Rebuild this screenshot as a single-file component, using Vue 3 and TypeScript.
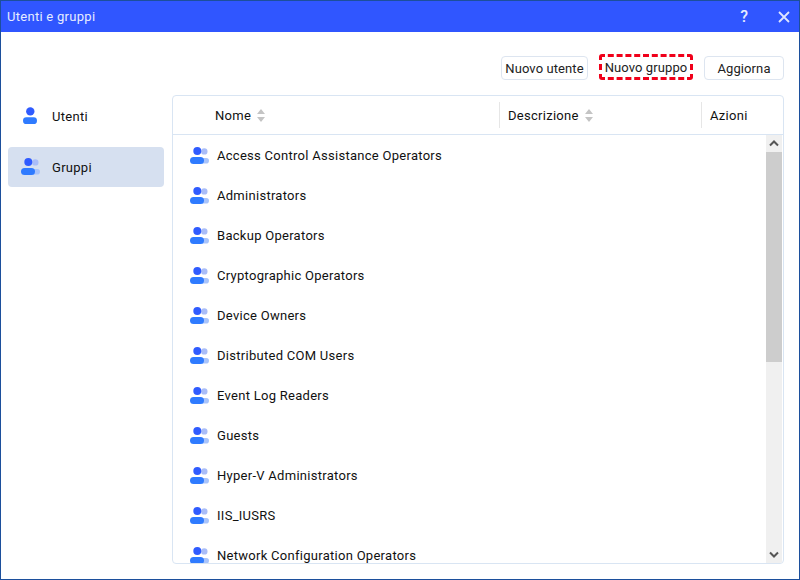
<script setup lang="ts">
const groups: string[] = [
  'Access Control Assistance Operators',
  'Administrators',
  'Backup Operators',
  'Cryptographic Operators',
  'Device Owners',
  'Distributed COM Users',
  'Event Log Readers',
  'Guests',
  'Hyper-V Administrators',
  'IIS_IUSRS',
  'Network Configuration Operators',
]
</script>

<template>
  <div class="win">
    <header class="title">
      <span class="title-text">Utenti e gruppi</span>
      <span class="help">?</span>
      <svg class="close" width="12" height="12" viewBox="0 0 12 12">
        <path d="M1 1 L11 11 M11 1 L1 11" stroke="#dfe6ff" stroke-width="1.8" fill="none" />
      </svg>
    </header>
    <div class="toolbar">
      <button class="btn b1">Nuovo utente</button>
      <button class="btn b2">Nuovo gruppo</button>
      <button class="btn b3">Aggiorna</button>
    </div>
    <div class="body">
      <nav class="side">
        <div class="nav-item first">
          <svg class="nav-icon" width="20" height="20" viewBox="0 0 20 20">
            <circle cx="9.3" cy="5.4" r="4.2" fill="#2f5bff" />
            <rect x="2" y="11.3" width="14" height="6.8" rx="3.4" fill="#2f7bff" />
          </svg>
          <span>Utenti</span>
        </div>
        <div class="nav-item active">
          <svg class="group-icon" width="20" height="18" viewBox="0 0 20 18">
            <circle cx="14.3" cy="4.4" r="3.2" fill="#a9bdf8" />
            <rect x="10" y="11" width="9" height="5.6" rx="2.8" fill="#a9c4fb" />
            <circle cx="7.3" cy="4" r="4" fill="#2f5bff" />
            <rect x="0" y="10" width="14" height="7" rx="3.5" fill="#2f7bff" />
          </svg>
          <span>Gruppi</span>
        </div>
      </nav>
      <section class="panel">
        <div class="thead">
          <div class="th c-name">Nome
            <svg class="sort" width="8" height="13" viewBox="0 0 8 13"><path d="M4 0 L8 5 H0 Z M4 13 L8 8 H0 Z" fill="#c4c4c4" /></svg>
          </div>
          <div class="th c-desc">Descrizione
            <svg class="sort" width="8" height="13" viewBox="0 0 8 13"><path d="M4 0 L8 5 H0 Z M4 13 L8 8 H0 Z" fill="#c4c4c4" /></svg>
          </div>
          <div class="th c-act">Azioni</div>
        </div>
        <div class="tbody">
          <div class="rows">
            <div v-for="g in groups" :key="g" class="row">
              <svg class="group-icon" width="20" height="18" viewBox="0 0 20 18">
                <circle cx="14.3" cy="4.4" r="3.2" fill="#a9bdf8" />
                <rect x="10" y="11" width="9" height="5.6" rx="2.8" fill="#a9c4fb" />
                <circle cx="7.3" cy="4" r="4" fill="#2f5bff" />
                <rect x="0" y="10" width="14" height="7" rx="3.5" fill="#2f7bff" />
              </svg>
              <span>{{ g }}</span>
            </div>
          </div>
          <div class="scrollbar">
            <div class="arrow">
              <svg width="10" height="7" viewBox="0 0 10 7"><path d="M1 5.5 L5 1.5 L9 5.5" stroke="#555" stroke-width="2" fill="none" /></svg>
            </div>
            <div class="thumb"></div>
            <div class="track"></div>
            <div class="arrow">
              <svg width="10" height="7" viewBox="0 0 10 7"><path d="M1 1.5 L5 5.5 L9 1.5" stroke="#555" stroke-width="2" fill="none" /></svg>
            </div>
          </div>
        </div>
      </section>
    </div>
  </div>
</template>

<style>
html, body { margin: 0; background: #fff; }
</style>

<style scoped>
.win {
  width: 800px;
  height: 580px;
  box-sizing: border-box;
  border: 1px solid #1c4f9c;
  background: #fff;
  display: flex;
  flex-direction: column;
  overflow: hidden;
  font-family: Roboto, "Liberation Sans", sans-serif;
  font-size: 13px;
  letter-spacing: 0.28px;
  color: #111;
}
.title {
  height: 31px;
  flex: none;
  background: #3056ff;
  color: #e6ecff;
  display: flex;
  align-items: center;
  padding: 0 9px 0 6px;
}
.title-text { flex: 1; }
.help { font-size: 16px; font-weight: 500; margin-right: 30px; letter-spacing: 0; }
.toolbar {
  flex: none;
  height: 63px;
  box-sizing: border-box;
  padding-top: 24px;
  display: flex;
  justify-content: flex-end;
  align-items: flex-start;
  padding-right: 15px;
}
.btn {
  height: 24px;
  box-sizing: border-box;
  background: #fff;
  border: 1px solid #dde5f0;
  border-radius: 4px;
  font: inherit;
  letter-spacing: 0.1px;
  color: #222;
  padding: 0;
  text-align: center;
  white-space: nowrap;
}
.b1 { width: 87px; }
.b2 {
  width: 94px;
  height: 26px;
  margin: -2px 0 0 11px;
  padding-top: 1px;
  border: 3px dashed #f0001a;
  border-radius: 3px;
}
.b3 { width: 80px; margin-left: 11px; }
.body { flex: 1; display: flex; min-height: 0; }
.side { width: 171px; flex: none; padding-left: 7px; box-sizing: border-box; }
.nav-item {
  width: 156px;
  height: 40px;
  box-sizing: border-box;
  display: flex;
  align-items: center;
  border-radius: 4px;
  padding-left: 13px;
}
.first { margin-top: 1px; }
.nav-item span { margin-left: 11px; }
.active { background: #d6e0f0; margin-top: 11px; }
.panel {
  width: 612px;
  height: 469px;
  box-sizing: border-box;
  border: 1px solid #d9e5f3;
  border-radius: 4px;
  display: flex;
  flex-direction: column;
  overflow: hidden;
}
.thead {
  height: 39px;
  flex: none;
  box-sizing: border-box;
  border-bottom: 1px solid #d9e5f3;
  display: flex;
  align-items: center;
}
.th {
  height: 26px;
  display: flex;
  align-items: center;
  color: #111;
}
.c-name { width: 327px; box-sizing: border-box; padding-left: 42px; border-right: 1px solid #e6e6e6; }
.c-desc { width: 202px; box-sizing: border-box; padding-left: 8px; border-right: 1px solid #e6e6e6; }
.c-act { padding-left: 8px; }
.sort { margin-left: 6px; }
.tbody { flex: 1; display: flex; min-height: 0; position: relative; }
.rows { flex: 1; overflow: hidden; }
.row {
  height: 40px;
  display: flex;
  align-items: center;
  padding-left: 17px;
}
.row span { margin-left: 7px; }
.row .group-icon { margin-top: 2px; }
.group-icon { flex: none; }
.scrollbar {
  width: 16px;
  margin-right: 1px;
  flex: none;
  background: #f0f0f0;
  display: flex;
  flex-direction: column;
}
.arrow { height: 17px; flex: none; display: flex; align-items: center; justify-content: center; }
.thumb { height: 210px; flex: none; background: #cdcdcd; }
.track { flex: 1; }
</style>
